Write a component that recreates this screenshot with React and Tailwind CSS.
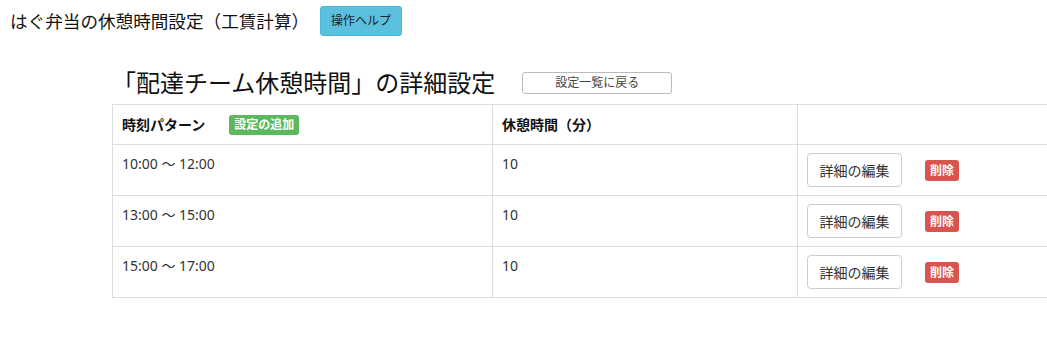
const rows = [
  { time: "10:00 ～ 12:00", rest: "10" },
  { time: "13:00 ～ 15:00", rest: "10" },
  { time: "15:00 ～ 17:00", rest: "10" },
];

export default function App() {
  return (
    <div
      className="w-[1047px] h-[356px] overflow-hidden bg-white text-[#333]"
      style={{ fontFamily: '"Noto Sans", "Noto Sans CJK JP", sans-serif' }}
    >
      <div className="flex items-center pt-[6px] pl-[10px]">
        <h1 className="text-[17.6px] leading-[30px] text-[#111]">
          はぐ弁当の休憩時間設定（工賃計算）
        </h1>
        <button className="ml-[11px] h-[30px] w-[82px] rounded-[3px] border border-[#46b8da] bg-[#5bc0de] text-[12px] text-[#222]">
          操作ヘルプ
        </button>
      </div>

      <div className="ml-[112px] mt-[30px]">
        <div className="flex items-center">
          <h2 className="text-[24px] leading-[34px] text-[#111]">
            「配達チーム休憩時間」の詳細設定
          </h2>
          <button className="ml-[27px] h-[22px] w-[150px] rounded-[3px] border border-[#bbb] bg-white text-[12px] text-[#444]">
            設定一覧に戻る
          </button>
        </div>

        <table className="mt-[4px] w-[1000px] border-collapse text-[14px]">
          <thead>
            <tr className="h-[40px]">
              <th className="w-[380px] border border-[#ddd] px-[9px] text-left align-middle font-bold text-[#111]">
                <div className="flex items-center">
                  <span>時刻パターン</span>
                  <span className="ml-[24px] rounded-[3px] bg-[#5cb85c] px-[5px] text-[12px] leading-[20px] text-white">
                    設定の追加
                  </span>
                </div>
              </th>
              <th className="w-[305px] border border-[#ddd] px-[9px] text-left align-middle font-bold text-[#111]">
                休憩時間（分）
              </th>
              <th className="border border-[#ddd]"></th>
            </tr>
          </thead>
          <tbody>
            {rows.map((r, i) => (
              <tr key={i} className="h-[51px]">
                <td className="border border-[#ddd] px-[9px] pt-[8px] align-top">
                  {r.time}
                </td>
                <td className="border border-[#ddd] px-[9px] pt-[8px] align-top">
                  {r.rest}
                </td>
                <td className="border border-[#ddd] pl-[9px] align-middle">
                  <div className="flex items-center">
                    <button className="h-[34px] w-[95px] rounded-[4px] border border-[#ccc] bg-white text-[14px] text-[#333]">
                      詳細の編集
                    </button>
                    <span className="ml-[23px] rounded-[3px] bg-[#d9534f] px-[5px] text-[12px] leading-[21px] font-bold text-white">
                      削除
                    </span>
                  </div>
                </td>
              </tr>
            ))}
          </tbody>
        </table>
      </div>
    </div>
  );
}
